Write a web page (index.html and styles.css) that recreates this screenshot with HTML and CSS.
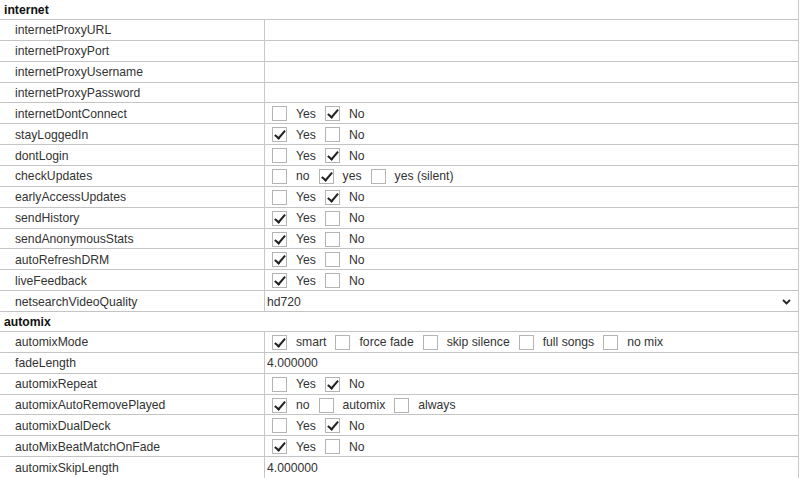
FILE: index.html
```html
<!DOCTYPE html>
<html lang="en">
<head>
    <meta charset="UTF-8">
    <title>Settings</title>
    <link rel="stylesheet" href="styles.css">
</head>
<body>
    <div class="settings">
        <div class="section">internet</div>
        <div class="row"><div class="key">internetProxyURL</div><div class="val"></div></div>
        <div class="row"><div class="key">internetProxyPort</div><div class="val"></div></div>
        <div class="row"><div class="key">internetProxyUsername</div><div class="val"></div></div>
        <div class="row"><div class="key">internetProxyPassword</div><div class="val"></div></div>
        <div class="row"><div class="key">internetDontConnect</div><div class="val">
            <span class="opt"><span class="box"></span>Yes</span>
            <span class="opt"><span class="box on"></span>No</span>
        </div></div>
        <div class="row"><div class="key">stayLoggedIn</div><div class="val">
            <span class="opt"><span class="box on"></span>Yes</span>
            <span class="opt"><span class="box"></span>No</span>
        </div></div>
        <div class="row"><div class="key">dontLogin</div><div class="val">
            <span class="opt"><span class="box"></span>Yes</span>
            <span class="opt"><span class="box on"></span>No</span>
        </div></div>
        <div class="row"><div class="key">checkUpdates</div><div class="val">
            <span class="opt"><span class="box"></span>no</span>
            <span class="opt"><span class="box on"></span>yes</span>
            <span class="opt"><span class="box"></span>yes (silent)</span>
        </div></div>
        <div class="row"><div class="key">earlyAccessUpdates</div><div class="val">
            <span class="opt"><span class="box"></span>Yes</span>
            <span class="opt"><span class="box on"></span>No</span>
        </div></div>
        <div class="row"><div class="key">sendHistory</div><div class="val">
            <span class="opt"><span class="box on"></span>Yes</span>
            <span class="opt"><span class="box"></span>No</span>
        </div></div>
        <div class="row"><div class="key">sendAnonymousStats</div><div class="val">
            <span class="opt"><span class="box on"></span>Yes</span>
            <span class="opt"><span class="box"></span>No</span>
        </div></div>
        <div class="row"><div class="key">autoRefreshDRM</div><div class="val">
            <span class="opt"><span class="box on"></span>Yes</span>
            <span class="opt"><span class="box"></span>No</span>
        </div></div>
        <div class="row"><div class="key">liveFeedback</div><div class="val">
            <span class="opt"><span class="box on"></span>Yes</span>
            <span class="opt"><span class="box"></span>No</span>
        </div></div>
        <div class="row"><div class="key">netsearchVideoQuality</div><div class="val select">
            <span>hd720</span>
            <svg class="chevron" width="9" height="6" viewBox="0 0 9 6"><path d="M1 1 L4.5 4.5 L8 1" fill="none" stroke="#222" stroke-width="1.8"/></svg>
        </div></div>

        <div class="section">automix</div>
        <div class="row"><div class="key">automixMode</div><div class="val">
            <span class="opt"><span class="box on"></span>smart</span>
            <span class="opt"><span class="box"></span>force fade</span>
            <span class="opt"><span class="box"></span>skip silence</span>
            <span class="opt"><span class="box"></span>full songs</span>
            <span class="opt"><span class="box"></span>no mix</span>
        </div></div>
        <div class="row"><div class="key">fadeLength</div><div class="val text">4.000000</div></div>
        <div class="row"><div class="key">automixRepeat</div><div class="val">
            <span class="opt"><span class="box"></span>Yes</span>
            <span class="opt"><span class="box on"></span>No</span>
        </div></div>
        <div class="row"><div class="key">automixAutoRemovePlayed</div><div class="val">
            <span class="opt"><span class="box on"></span>no</span>
            <span class="opt"><span class="box"></span>automix</span>
            <span class="opt"><span class="box"></span>always</span>
        </div></div>
        <div class="row"><div class="key">automixDualDeck</div><div class="val">
            <span class="opt"><span class="box"></span>Yes</span>
            <span class="opt"><span class="box on"></span>No</span>
        </div></div>
        <div class="row"><div class="key">autoMixBeatMatchOnFade</div><div class="val">
            <span class="opt"><span class="box on"></span>Yes</span>
            <span class="opt"><span class="box"></span>No</span>
        </div></div>
        <div class="row last"><div class="key">automixSkipLength</div><div class="val text">4.000000</div></div>
    </div>
</body>
</html>
```

FILE: styles.css
```css
body {
    margin: 0;
    background: #fff;
    font-family: 'Liberation Sans', Arial, sans-serif;
    font-size: 12.2px;
    color: #333;
}

.settings {
    width: 799px;
    border-right: 1px solid #c8c8c8;
    box-sizing: border-box;
}

.section {
    height: 20px;
    line-height: 20px;
    padding-left: 4px;
    font-weight: bold;
    color: #111;
    border-bottom: 1px solid #c4c4c4;
    box-sizing: border-box;
}

.row {
    display: grid;
    grid-template-columns: 265px 1fr;
    height: 20.86px;
    border-bottom: 1px solid #c4c4c4;
    box-sizing: border-box;
}

.row.last {
    border-bottom: none;
}

.key {
    padding-left: 15px;
    border-right: 1px solid #c8c8c8;
    display: flex;
    align-items: center;
    padding-top: 1px;
}

.val {
    display: flex;
    align-items: center;
    gap: 9px;
    padding-left: 7px;
    padding-top: 1px;
}

.val.text {
    padding-left: 2px;
}

.val.select {
    padding-left: 2px;
    padding-right: 7px;
    justify-content: space-between;
}

.opt {
    display: flex;
    align-items: center;
    gap: 9px;
}

/* checkbox look */
.box {
    width: 15px;
    height: 15px;
    border: 1px solid #b4b4b4;
    background: #fff;
    box-sizing: border-box;
    position: relative;
}

.box.on::after {
    content: "";
    position: absolute;
    left: 4px;
    top: 0px;
    width: 4px;
    height: 9px;
    border-right: 2px solid #222;
    border-bottom: 2px solid #222;
    transform: rotate(40deg);
}
```
